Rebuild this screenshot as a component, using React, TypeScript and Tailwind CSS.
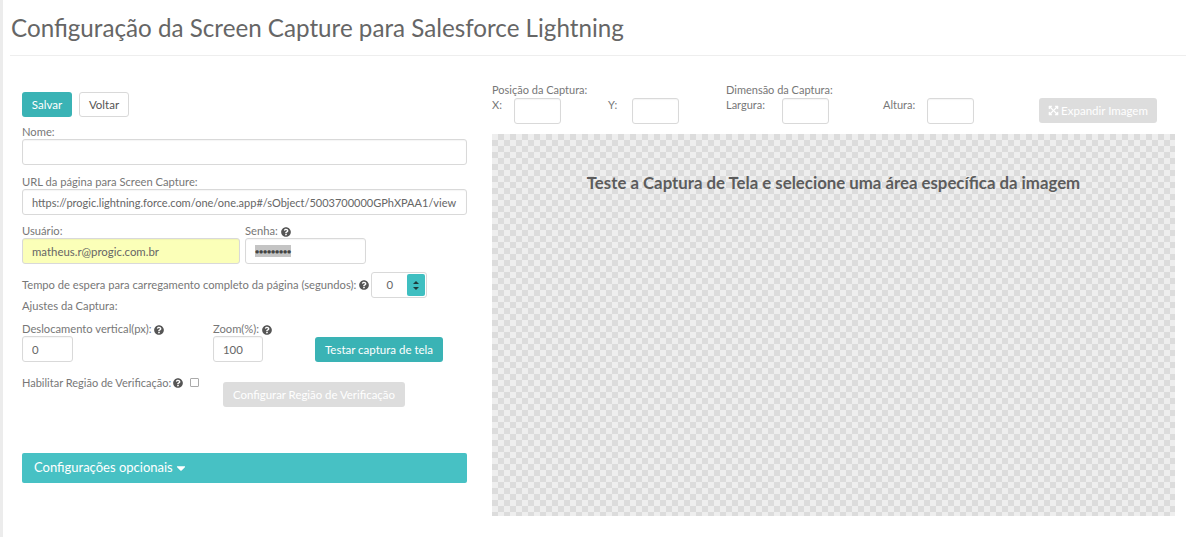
import { FaQuestionCircle, FaCaretDown, FaExpandArrowsAlt } from 'react-icons/fa';

const inputClass =
  'block h-[26px] rounded-[3px] border border-[#d9d9d9] px-[9px] text-[11.4px] text-[#666666] outline-none shadow-[inset_0_1px_1px_rgba(0,0,0,0.04)]';

function Help() {
  return <FaQuestionCircle className="inline-block h-[10px] w-[10px] text-[#555555]" />;
}

function Label({ children }: { children: React.ReactNode }) {
  return <div className="h-[16px] whitespace-nowrap pt-[1px] text-[11.2px] leading-[16px] text-[#777777]">{children}</div>;
}

function CoordField({ label, className }: { label: string; className: string }) {
  return <span className={`text-[11px] leading-[14px] text-[#777777] ${className}`}>{label}</span>;
}

export default function App() {
  return (
    <div className="h-[537px] w-[1186px] overflow-hidden border-l-[3px] border-[#ececec] bg-white font-['Lato',sans-serif]">
      <div className="ml-[7px] flex h-[56px] items-center border-b border-[#eeeeee]">
        <h1 className="ml-[1px] text-[24.2px] leading-[26px] text-[#666666]">
          Configuração da Screen Capture para Salesforce Lightning
        </h1>
      </div>

      <div className="flex pl-[19px]">
        {/* coluna esquerda */}
        <div className="w-[445px] pt-[36px]">
          <div className="flex gap-[7px]">
            <button className="h-[25px] w-[50px] rounded-[3px] bg-[#3ab3b5] text-[11.5px] text-white">Salvar</button>
            <button className="h-[25px] w-[50px] rounded-[3px] border border-[#d9d9d9] bg-white text-[11.5px] text-[#555555]">
              Voltar
            </button>
          </div>

          <div className="mt-[6px]">
            <Label>Nome:</Label>
            <input className={`${inputClass} w-full bg-white`} />
          </div>

          <div className="mt-[8px]">
            <Label>URL da página para Screen Capture:</Label>
            <input
              className={`${inputClass} w-full bg-white text-[11px]`}
              defaultValue="https://progic.lightning.force.com/one/one.app#/sObject/5003700000GPhXPAA1/view"
            />
          </div>

          <div className="mt-[7px] flex gap-[5px]">
            <div>
              <Label>Usuário:</Label>
              <input className={`${inputClass} w-[218px] bg-[#fbffb8]`} defaultValue="matheus.r@progic.com.br" />
            </div>
            <div>
              <Label>
                Senha: <Help />
              </Label>
              <div className={`${inputClass} flex w-[121px] items-center bg-white`}>
                <span className="bg-[#c4c4c4] text-[7px] leading-[12px] tracking-[-0.2px] text-[#444444]">●●●●●●●●●</span>
              </div>
            </div>
          </div>

          <div className="mt-[8px] flex items-center gap-[2px]">
            <span className="flex items-center gap-[3px] whitespace-nowrap text-[11.2px] text-[#777777]">
              Tempo de espera para carregamento completo da página (segundos): <Help />
            </span>
            <div className="flex h-[26px] w-[56px] items-center rounded-[3px] border border-[#d9d9d9] bg-white">
              <span className="flex-1 text-center text-[11.4px] text-[#666666]">0</span>
              <span className="mr-[1px] flex h-[22px] w-[18px] flex-col items-center justify-center gap-[3px] rounded-[2px] bg-[#3fbfc1]">
                <span className="border-x-[3px] border-b-[3px] border-x-transparent border-b-[#1f3a3a]" />
                <span className="border-x-[3px] border-t-[3px] border-x-transparent border-t-[#1f3a3a]" />
              </span>
            </div>
          </div>

          <div className="h-[16px] text-[11.2px] leading-[16px] text-[#777777]">Ajustes da Captura:</div>

          <div className="mt-[6px] flex items-end">
            <div className="w-[191px]">
              <Label>
                Deslocamento vertical(px): <Help />
              </Label>
              <input className={`${inputClass} w-[51px] bg-white`} defaultValue="0" />
            </div>
            <div className="w-[102px]">
              <Label>
                Zoom(%): <Help />
              </Label>
              <input className={`${inputClass} w-[50px] bg-white`} defaultValue="100" />
            </div>
            <button className="h-[25px] w-[128px] whitespace-nowrap rounded-[3px] bg-[#3ab3b5] text-[11.5px] text-white">
              Testar captura de tela
            </button>
          </div>

          <div className="mt-[12px] flex items-start">
            <span className="mt-[1px] flex w-[168px] items-center gap-[2px] whitespace-nowrap text-[11px] leading-[16px] text-[#777777]">
              Habilitar Região de Verificação: <Help />
            </span>
            <input
              type="checkbox"
              className="mt-[4px] h-[9px] w-[9px] appearance-none rounded-[1px] border border-[#aaaaaa] bg-white"
            />
            <button
              disabled
              className="ml-[24px] mt-[8px] h-[25px] w-[182px] whitespace-nowrap rounded-[3px] bg-[#dddddd] text-[11.4px] text-white"
            >
              Configurar Região de Verificação
            </button>
          </div>

          <div className="mt-[46px] flex h-[30px] items-center rounded-[2px] bg-[#47c1c4] px-[12px] text-[13px] text-white">
            Configurações opcionais <FaCaretDown className="ml-[1px] h-[14px] w-[14px]" />
          </div>
        </div>

        {/* coluna direita */}
        <div className="ml-[25px] w-[683px] pt-[27px]">
          <div className="flex h-[51px] items-start">
            <div className="w-[234px]">
              <div className="h-[15px] text-[11px] leading-[14px] text-[#777777]">Posição da Captura:</div>
              <div className="flex items-start">
                <CoordField label="X:" className="w-[22px]" />
                <input className={`${inputClass} w-[47px] bg-white`} />
                <CoordField label="Y:" className="ml-[47px] w-[24px]" />
                <input className={`${inputClass} w-[47px] bg-white`} />
              </div>
            </div>
            <div className="w-[313px]">
              <div className="h-[15px] text-[11px] leading-[14px] text-[#777777]">Dimensão da Captura:</div>
              <div className="flex items-start">
                <CoordField label="Largura:" className="w-[56px]" />
                <input className={`${inputClass} w-[47px] bg-white`} />
                <CoordField label="Altura:" className="ml-[54px] w-[44px]" />
                <input className={`${inputClass} w-[47px] bg-white`} />
              </div>
            </div>
            <button
              disabled
              className="mt-[15px] flex h-[25px] w-[118px] items-center justify-center gap-[2px] whitespace-nowrap rounded-[3px] bg-[#dddddd] text-[11.5px] text-white"
            >
              <FaExpandArrowsAlt className="h-[11px] w-[11px]" /> Expandir Imagem
            </button>
          </div>

          <div className="h-[382px] bg-[repeating-conic-gradient(#dcdcdc_0_25%,#eeeeee_0_50%)] bg-size-[12px_12px] pt-[39px] text-center text-[16.8px] font-bold leading-[20px] text-[#5c5c5c]">
            Teste a Captura de Tela e selecione uma área específica da imagem
          </div>
        </div>
      </div>
    </div>
  );
}
